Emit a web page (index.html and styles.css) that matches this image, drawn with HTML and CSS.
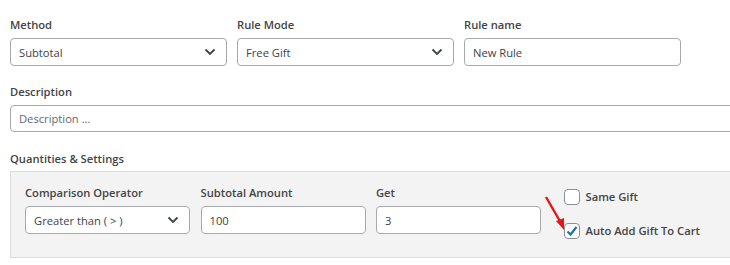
FILE: index.html
```html
<!DOCTYPE html>
<html lang="en">
<head>
    <meta charset="UTF-8">
    <title>Rule Settings</title>
    <link rel="stylesheet" href="styles.css">
</head>
<body>
    <div class="page">
        <!-- Top row: method, mode, name -->
        <div class="row-top">
            <div class="field">
                <label class="label">Method</label>
                <div class="select">
                    <span>Subtotal</span>
                    <svg class="chev" width="12" height="8" viewBox="0 0 12 8"><path d="M1.5 1.5 L6 6 L10.5 1.5" fill="none" stroke="#3c434a" stroke-width="1.8"/></svg>
                </div>
            </div>
            <div class="field">
                <label class="label">Rule Mode</label>
                <div class="select">
                    <span>Free Gift</span>
                    <svg class="chev" width="12" height="8" viewBox="0 0 12 8"><path d="M1.5 1.5 L6 6 L10.5 1.5" fill="none" stroke="#3c434a" stroke-width="1.8"/></svg>
                </div>
            </div>
            <div class="field">
                <label class="label">Rule name</label>
                <div class="input">New Rule</div>
            </div>
        </div>

        <!-- Description -->
        <div class="field desc">
            <label class="label">Description</label>
            <div class="input wide placeholder">Description ...</div>
        </div>

        <!-- Quantities -->
        <div class="label section">Quantities &amp; Settings</div>
        <div class="panel">
            <div class="field small">
                <label class="label">Comparison Operator</label>
                <div class="select">
                    <span>Greater than ( &gt; )</span>
                    <svg class="chev" width="12" height="8" viewBox="0 0 12 8"><path d="M1.5 1.5 L6 6 L10.5 1.5" fill="none" stroke="#3c434a" stroke-width="1.8"/></svg>
                </div>
            </div>
            <div class="field small">
                <label class="label">Subtotal Amount</label>
                <div class="input">100</div>
            </div>
            <div class="field small">
                <label class="label">Get</label>
                <div class="input">3</div>
            </div>
            <div class="checks">
                <div class="check-row">
                    <span class="box"></span>
                    <span class="label">Same Gift</span>
                </div>
                <div class="check-row">
                    <span class="box">
                        <svg width="14" height="14" viewBox="0 0 14 14"><path d="M2.5 7.5 L5.5 10.5 L11.5 3" fill="none" stroke="#2271b1" stroke-width="2.2"/></svg>
                    </span>
                    <span class="label">Auto Add Gift To Cart</span>
                </div>
            </div>
            <!-- annotation arrow -->
            <svg class="arrow" width="30" height="42" viewBox="0 0 30 42">
                <path d="M3 3 L18 29" stroke="#e8141b" stroke-width="2.4" fill="none"/>
                <path d="M13 27 L21 36 L21 24 Z" fill="#e8141b"/>
            </svg>
        </div>
    </div>
</body>
</html>
```

FILE: styles.css
```css
/* Base page */
body {
    margin: 0;
    font-family: "Open Sans", "Noto Sans", sans-serif;
    font-size: 11.2px;
    color: #444;
    background: #fff;
    overflow: hidden;
}

.page {
    padding: 16px 0 0 10px;
    width: 720px;
}

/* Labels */
.label {
    display: block;
    font-weight: 600;
    line-height: 18px;
    color: #444;
    margin-bottom: 4px;
}

/* Top row */
.row-top {
    display: flex;
    gap: 10px;
}

.row-top .field {
    width: 217px;
}

/* Fields */
.select, .input {
    box-sizing: border-box;
    height: 28px;
    border: 1px solid #a7aaad;
    border-radius: 4px;
    background: #fff;
    padding: 0 8px;
    display: flex;
    align-items: center;
    justify-content: space-between;
    color: #3c434a;
    white-space: nowrap;
}

.chev {
    margin-right: 2px;
}

.desc {
    margin-top: 17px;
}

.wide {
    width: 730px;
    height: 27px;
}

.placeholder {
    color: #646970;
}

.section {
    margin-top: 18px;
    margin-bottom: 3px;
}

/* Quantities panel */
.panel {
    position: relative;
    display: flex;
    align-items: flex-start;
    gap: 10.5px;
    background: #f3f3f3;
    border: 1px solid #dcdcde;
    padding: 12px 0 23px 14px;
    width: 730px;
    box-sizing: border-box;
}

.small {
    width: 165px;
}

/* Checkbox column */
.checks {
    margin-left: 12px;
    padding-top: 4px;
    margin-bottom: -6px;
    display: flex;
    flex-direction: column;
    gap: 16px;
}

.check-row {
    display: flex;
    align-items: center;
    gap: 6px;
}

.check-row .label {
    margin: 0;
}

.box {
    box-sizing: border-box;
    width: 16px;
    height: 16px;
    border: 1px solid #8c8f94;
    border-radius: 4px;
    background: #fff;
    display: flex;
    align-items: center;
    justify-content: center;
}

/* red annotation arrow over the panel */
.arrow {
    position: absolute;
    left: 532px;
    top: 22px;
}
```
